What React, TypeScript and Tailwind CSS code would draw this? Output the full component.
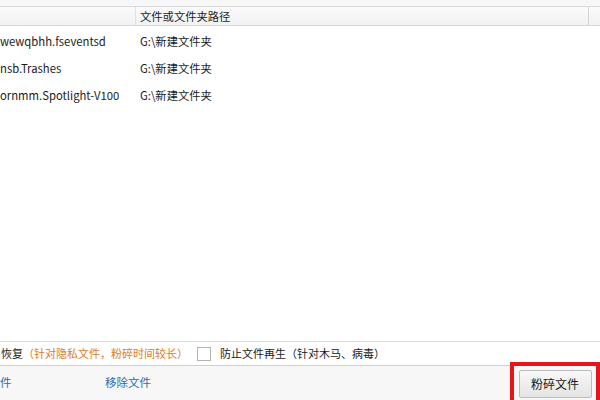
import React from "react";

const rows = [
  { name: "wewqbhh.fseventsd", path: "G:\\新建文件夹" },
  { name: "nsb.Trashes", path: "G:\\新建文件夹" },
  { name: "ornmm.Spotlight-V100", path: "G:\\新建文件夹" },
];

const font = { fontFamily: '"Noto Sans CJK SC", "Noto Sans", sans-serif' };

export default function App() {
  return (
    <div
      className="flex h-[400px] w-[600px] flex-col overflow-hidden bg-white text-[11px] text-[#1a1a1a]"
      style={font}
    >
      <div className="h-[6px] shrink-0 bg-[#f7f7f7]" />
      {/* column header */}
      <div className="flex h-[20px] shrink-0 border-y border-[#d9d9d9] bg-gradient-to-b from-[#fbfbfb] to-[#f1f1f1] text-[11.3px] leading-[19px]">
        <div className="w-[136px] shrink-0 border-r border-[#e2e2e2]" />
        <div className="flex-1 border-r border-[#d4d4d4] pl-[4px]">文件或文件夹路径</div>
        <div className="w-[11px] shrink-0" />
      </div>
      {/* list */}
      <div className="flex-1 pt-[2px] text-[11.3px]">
        {rows.map((r) => (
          <div key={r.name} className="flex h-[27px] items-center">
            <div className="w-[140px] shrink-0 whitespace-nowrap">{r.name}</div>
            <div>{r.path}</div>
          </div>
        ))}
      </div>
      {/* options */}
      <div className="flex h-[24px] shrink-0 items-center border-t border-[#dcdcdc] pl-[1px]">
        <span>恢复</span>
        <span className="text-[#e07b1a]">（针对隐私文件，粉碎时间较长）</span>
        <span className="ml-[9px] h-[14px] w-[14px] border border-[#b5b5b5] bg-white" />
        <span className="ml-[9px]">防止文件再生（针对木马、病毒）</span>
      </div>
      {/* footer */}
      <div className="flex h-[35px] shrink-0 items-center border-t border-[#d0d0d0] bg-[#f7f7f7] text-[11.5px]">
        <span className="w-[105px] text-[#2c6bb3]">件</span>
        <span className="text-[#2c6bb3]">移除文件</span>
        <div className="ml-auto flex h-[38px] w-[90px] items-center justify-center self-end border-[4px] border-b-0 border-[#e8141c] pt-[1px]">
          <button className="h-[28px] w-[73px] rounded-[2px] border border-[#bcbcbc] bg-gradient-to-b from-[#f8f8f8] to-[#e4e4e4] text-[12px] text-[#1a1a1a]">
            粉碎文件
          </button>
        </div>
      </div>
    </div>
  );
}
